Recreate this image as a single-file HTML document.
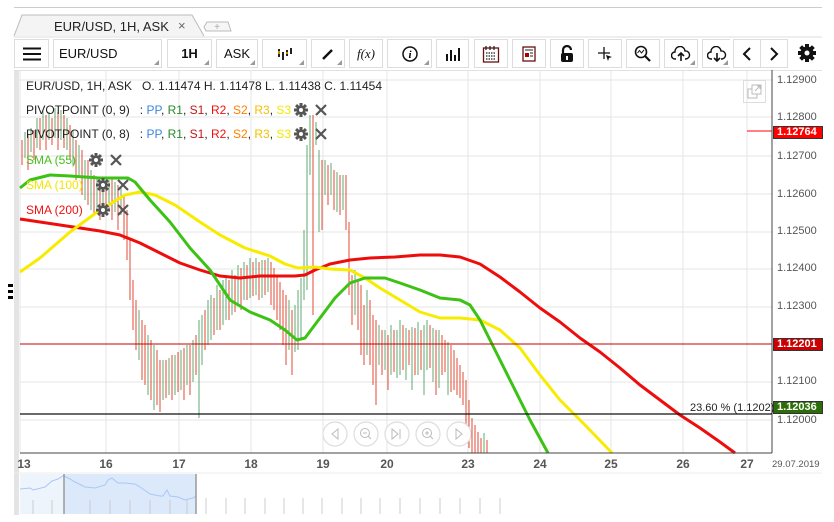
<!DOCTYPE html>
<html><head><meta charset="utf-8"><style>
*{margin:0;padding:0;box-sizing:border-box}
body{width:834px;height:522px;background:#fff;font-family:"Liberation Sans",sans-serif;position:relative;overflow:hidden}
.b{position:absolute;top:39px;height:29px;border:1px solid #ddd;background:#fff;font-size:13px;display:flex;align-items:center;justify-content:center;color:#111}
.tri{position:absolute;right:2px;bottom:2px;width:0;height:0;border-left:5px solid transparent;border-bottom:5px solid #999}
.t{position:absolute;font-size:12px;white-space:nowrap}
.pl{position:absolute;left:777px;font-size:11px;color:#555}
</style></head><body>
<div style="position:absolute;left:14px;top:7px;width:808px;height:1px;background:#ccc"></div>
<svg style="position:absolute;left:0;top:0" width="834" height="40">
<path d="M14 36 L22 15 L192 15 L204 36" fill="#f4f4f4" stroke="#bbb"/>
<path d="M204 27 L207 22 L228 22 L231 31 L206 31 Z" fill="#f6f6f6" stroke="#bbb"/>
<text x="217" y="30" font-size="10" fill="#aaa" text-anchor="middle" font-family="Liberation Sans">+</text>
<line x1="14" y1="37" x2="822" y2="37" stroke="#ddd"/>
</svg>
<div class="t" style="left:54px;top:19px;font-size:13px;color:#222">EUR/USD, 1H, ASK</div>
<div class="t" style="left:178px;top:18px;font-size:13px;color:#666">×</div>

<div class="b" style="left:14px;width:35px"><svg width="18" height="14"><path d="M0 1.5H18M0 7H18M0 12.5H18" stroke="#111" stroke-width="2"/></svg></div>
<div class="b" style="left:53px;width:109px;justify-content:flex-start;padding-left:5px">EUR/USD<span class="tri"></span></div>
<div class="b" style="left:167px;width:45px;font-weight:bold">1H<span class="tri"></span></div>
<div class="b" style="left:216px;width:42px">ASK<span class="tri"></span></div>
<div class="b" style="left:262px;width:45px"><svg width="16" height="12"><path d="M2 1V9M6 4V12M10 2V8M14 0V6" stroke="#222" stroke-width="2"/><path d="M2 3V6M10 4V6" stroke="#c80" stroke-width="2"/></svg><span class="tri"></span></div>
<div class="b" style="left:311px;width:34px"><svg width="12" height="12"><path d="M1 11L10 2" stroke="#111" stroke-width="2.5"/></svg><span class="tri"></span></div>
<div class="b" style="left:349px;width:34px;font-family:'Liberation Serif';font-style:italic;font-size:13px">f(x)</div>
<div class="b" style="left:387px;width:45px"><svg width="16" height="16"><circle cx="8" cy="8" r="7" fill="none" stroke="#111" stroke-width="1.5"/><text x="8" y="12" font-size="11" font-style="italic" font-weight="bold" text-anchor="middle" font-family="Liberation Serif">i</text></svg><span class="tri"></span></div>
<div class="b" style="left:436px;width:33px"><svg width="16" height="14"><path d="M2 14V7M6 14V3M10 14V8M14 14V1" stroke="#111" stroke-width="2"/></svg></div>
<div class="b" style="left:474px;width:34px"><svg width="18" height="18"><rect x="1.5" y="3" width="15" height="14" fill="none" stroke="#611" stroke-width="1.3"/><path d="M4 1V5M8 1V5M12 1V5M4 8h10M4 11h10M4 14h10" stroke="#222" stroke-width="1.3" stroke-dasharray="1.5 1"/></svg></div>
<div class="b" style="left:512px;width:34px"><svg width="14" height="16"><rect x="1" y="1" width="12" height="14" fill="none" stroke="#611" stroke-width="1.3"/><path d="M3 4h8M8 7h3M8 10h3" stroke="#222"/><rect x="3" y="7" width="4" height="4" fill="#a00"/></svg></div>
<div class="b" style="left:550px;width:34px"><svg width="14" height="18"><path d="M3 9V5a4 4 0 0 1 8 0" fill="none" stroke="#111" stroke-width="2.2"/><rect x="1" y="8" width="12" height="9" rx="2" fill="#111"/><rect x="6" y="11" width="2" height="4" fill="#fff"/></svg></div>
<div class="b" style="left:588px;width:34px"><svg width="16" height="16"><path d="M7 1V13M1 7H13" stroke="#111" stroke-width="1.3"/><path d="M9 9L15 11L12 12L11 15Z" fill="#111"/></svg></div>
<div class="b" style="left:626px;width:34px"><svg width="18" height="18"><circle cx="7" cy="7" r="5.5" fill="none" stroke="#111" stroke-width="1.6"/><path d="M11 11L16 16" stroke="#111" stroke-width="2.2"/><path d="M3.5 8L5.5 5.5L7.5 8L10 5" fill="none" stroke="#111"/></svg></div>
<div class="b" style="left:664px;width:34px"><svg width="20" height="16"><path d="M5 13H4a3.5 3.5 0 0 1 0-7a5 5 0 0 1 10-1a3.5 3.5 0 0 1 1 8h-1" fill="none" stroke="#111" stroke-width="1.4"/><path d="M10 15V7M7 10L10 7L13 10" fill="none" stroke="#111" stroke-width="1.6"/></svg><span class="tri"></span></div>
<div class="b" style="left:702px;width:28px;border-right:none"><svg width="20" height="16"><path d="M5 13H4a3.5 3.5 0 0 1 0-7a5 5 0 0 1 10-1a3.5 3.5 0 0 1 1 8h-1" fill="none" stroke="#111" stroke-width="1.4"/><path d="M10 7V15M7 12L10 15L13 12" fill="none" stroke="#111" stroke-width="1.6"/></svg><span class="tri"></span></div>
<div class="b" style="left:733px;width:28px"><svg width="10" height="14"><path d="M8 1L2 7L8 13" fill="none" stroke="#111" stroke-width="2"/></svg></div>
<div class="b" style="left:760px;width:28px"><svg width="10" height="14"><path d="M2 1L8 7L2 13" fill="none" stroke="#111" stroke-width="2"/></svg></div>
<div style="position:absolute;left:797px;top:43px"><svg width="20" height="20" viewBox="0 0 20 20"><g fill="#111"><circle cx="10" cy="10" r="6.5"/><rect x="8" y="1" width="4" height="18"/><rect x="1" y="8" width="18" height="4"/><g transform="rotate(45 10 10)"><rect x="8" y="1" width="4" height="18"/><rect x="1" y="8" width="18" height="4"/></g></g><circle cx="10" cy="10" r="2.5" fill="#fff"/></svg></div>

<div style="position:absolute;left:14px;top:70px;width:5px;height:445px;background:#e4e4e4"></div>
<div style="position:absolute;left:14px;top:70px;width:808px;height:1px;background:#e2e2e2"></div>

<svg style="position:absolute;left:0;top:0" width="834" height="522" font-family="Liberation Sans">
<g stroke="#e6e6e6">
<path d="M20 80H772M20 117H772M20 156H772M20 194H772M20 232H772M20 269H772M20 307H772M20 382H772M20 420H772"/>
<path d="M20 70V453M106 70V453M179 70V453M251 70V453M323 70V453M387 70V453M468 70V453M540 70V453M611 70V453M683 70V453M747 70V453"/>
</g>
<path stroke="#e04a35" fill="none" d="M22 140V165M28 135V170M34 130V160M40 118V150M46 115V150M52 118V145M58 112V150M64 115V148M70 125V160M76 140V180M82 150V195M88 160V205M94 175V215M100 182V220M106 185V215M112 178V220M118 185V230M124 195V240M127 210V260M130 240V300M133 280V330M136 300V350M142 320V380M145 325V385M151 340V400M157 350V405M160 360V412M166 360V398M172 355V400M178 352V392M184 348V400M190 345V395M196 335V375M205 310V350M214 298V335M220 290V330M229 280V320M235 275V312M241 268V310M247 265V300M253 262V296M259 262V300M265 260V295M271 262V305M274 268V310M277 275V320M280 282V330M283 290V345M286 295V365M292 310V375M313 115V315M322 160V230M328 165V205M334 170V210M340 175V215M346 175V230M349 222V295M352 275V325M358 280V330M361 285V355M364 305V365M370 300V365M373 315V385M376 320V405M382 330V375M388 335V390M394 330V372M403 325V370M409 330V365M415 328V375M421 330V370M430 325V368M436 330V395M442 335V375M445 340V372M451 345V392M454 350V390M457 358V395M460 365V398M463 372V405M466 380V438M469 400V448M472 418V453M475 425V453M478 432V453M481 438V453M487 440V453"/>
<path stroke="#5fa872" fill="none" d="M25 132V158M31 128V152M37 118V148M43 110V140M49 112V140M55 108V138M61 110V140M67 118V150M73 130V165M79 145V175M85 160V200M91 170V210M97 178V208M103 180V212M109 180V210M115 182V212M121 188V215M139 310V360M148 335V395M154 345V410M163 360V400M169 358V395M175 355V395M181 350V390M187 345V385M193 340V382M199 320V418M202 315V365M208 300V345M211 295V340M217 285V330M223 280V325M226 275V320M232 270V315M238 265V305M244 262V300M250 258V298M256 258V295M262 260V298M268 258V292M289 300V350M295 305V352M298 290V350M301 278V338M304 230V300M307 145V290M310 115V175M316 122V145M319 150V232M325 160V195M331 163V195M337 172V212M343 175V210M355 270V315M367 290V355M379 325V365M385 330V370M391 325V375M397 330V378M400 320V375M406 328V380M412 327V390M418 322V375M424 325V395M427 320V370M433 328V382M439 330V388M448 342V395M484 433V453"/>
<polyline fill="none" stroke="#ee0d0d" stroke-width="3" stroke-linejoin="round" points="20,219 40,222 60,225 80,228 100,231 120,235 140,243 160,253 180,263 200,270 220,276 240,278 260,276 280,276 295,276 305,275 315,270 330,264 350,260 370,258 395,257 420,255 440,255 460,257 480,264 500,277 520,292 540,308 560,322 580,338 600,352 620,368 640,385 660,400 680,415 700,428 720,442 735,453"/>
<polyline fill="none" stroke="#f7ec00" stroke-width="3" stroke-linejoin="round" points="20,272 40,258 70,232 100,210 125,195 140,192 155,195 175,205 200,222 220,235 245,248 270,256 285,264 298,268 315,267 330,269 350,270 365,278 380,288 400,300 420,312 440,318 460,318 480,320 500,330 520,348 540,375 560,400 585,425 612,453"/>
<polyline fill="none" stroke="#3cc214" stroke-width="3" stroke-linejoin="round" points="20,188 30,180 50,175 70,176 100,178 128,178 135,182 150,200 170,222 190,248 210,270 230,300 250,312 270,320 285,330 297,340 305,338 320,318 335,298 350,283 365,278 385,278 400,283 420,290 440,298 460,300 470,305 480,320 495,350 510,380 530,420 548,453"/>
<path d="M20 344H772" stroke="#c00000"/>
<path d="M20 414H772" stroke="#111" stroke-width="1.2"/>
<path d="M747 131H772" stroke="#f00"/>
<path d="M772 70V453M20 453H772" stroke="#444"/>
<g fill="#555">
<g transform="translate(301,110)"><circle r="4.5"/><rect x="-1.5" y="-7" width="3" height="14"/><rect x="-7" y="-1.5" width="14" height="3"/><rect x="-1.5" y="-7" width="3" height="14" transform="rotate(45)"/><rect x="-7" y="-1.5" width="14" height="3" transform="rotate(45)"/><circle r="2" fill="#fff"/></g>
<g transform="translate(301,134)"><circle r="4.5"/><rect x="-1.5" y="-7" width="3" height="14"/><rect x="-7" y="-1.5" width="14" height="3"/><rect x="-1.5" y="-7" width="3" height="14" transform="rotate(45)"/><rect x="-7" y="-1.5" width="14" height="3" transform="rotate(45)"/><circle r="2" fill="#fff"/></g>
<g transform="translate(96,160)"><circle r="4.5"/><rect x="-1.5" y="-7" width="3" height="14"/><rect x="-7" y="-1.5" width="14" height="3"/><rect x="-1.5" y="-7" width="3" height="14" transform="rotate(45)"/><rect x="-7" y="-1.5" width="14" height="3" transform="rotate(45)"/><circle r="2" fill="#fff"/></g>
<g transform="translate(103,185)"><circle r="4.5"/><rect x="-1.5" y="-7" width="3" height="14"/><rect x="-7" y="-1.5" width="14" height="3"/><rect x="-1.5" y="-7" width="3" height="14" transform="rotate(45)"/><rect x="-7" y="-1.5" width="14" height="3" transform="rotate(45)"/><circle r="2" fill="#fff"/></g>
<g transform="translate(103,210)"><circle r="4.5"/><rect x="-1.5" y="-7" width="3" height="14"/><rect x="-7" y="-1.5" width="14" height="3"/><rect x="-1.5" y="-7" width="3" height="14" transform="rotate(45)"/><rect x="-7" y="-1.5" width="14" height="3" transform="rotate(45)"/><circle r="2" fill="#fff"/></g>
</g>
<path stroke="#555" stroke-width="2.2" d="M316 105L326 115M326 105L316 115M316 129L326 139M326 129L316 139M111 155L121 165M121 155L111 165M118 180L128 190M128 180L118 190M118 205L128 215M128 205L118 215"/>
<g fill="#fff" stroke="#ddd" stroke-width="1.2"><circle cx="335" cy="434" r="12"/><circle cx="366" cy="434" r="12"/><circle cx="397" cy="434" r="12"/><circle cx="428" cy="434" r="12"/><circle cx="459" cy="434" r="12"/></g>
<path d="M338 429L332 434L338 439Z" fill="none" stroke="#bbb"/><circle cx="365" cy="433" r="4.5" fill="none" stroke="#bbb"/><path d="M368 436L371 439M363 433H367" stroke="#bbb"/><path d="M392 429V439L398 434ZM400 429V439" fill="none" stroke="#bbb"/><circle cx="427" cy="433" r="4.5" fill="none" stroke="#bbb"/><path d="M430 436L433 439M425 433H429M427 431V435" stroke="#bbb"/><path d="M456 429L462 434L456 439Z" fill="none" stroke="#bbb"/>
<g font-size="12" font-weight="bold" fill="#555" text-anchor="middle">
<text x="24" y="468">13</text><text x="106" y="468">16</text><text x="179" y="468">17</text><text x="251" y="468">18</text><text x="323" y="468">19</text><text x="387" y="468">20</text><text x="468" y="468">23</text><text x="540" y="468">24</text><text x="611" y="468">25</text><text x="683" y="468">26</text><text x="747" y="468">27</text>
</g>
<text x="772" y="467" font-size="9.5" fill="#555">29.07.2019</text>
<path d="M14 473H822" stroke="#eee"/>
<rect x="20" y="474" width="44" height="40" fill="#eef4fc"/><rect x="64" y="474" width="132" height="40" fill="#dce9fb"/>
<polyline points="20,489 30,488 33,490 45,487 52,481 58,479 63,476 64,476 70,479 75,482 85,487 95,488 105,485 108,480 112,478 118,483 125,483 135,484 143,489 150,494 160,496 163,496 167,490 170,496 178,497 185,500 193,498 196,496" fill="none" stroke="#a9c8f5"/>
<path d="M64 474V514M196 474V514" stroke="#999" stroke-width="1.5"/>
<path stroke="#ccc" d="M33 500V514M52 500V514M90 500V514M110 500V514M130 500V514M150 500V514M170 500V514M187 500V514M206 498V514M226 498V514M245 498V514M265 498V514M284 498V514M303 498V514M322 498V514M342 498V514M361 498V514M380 498V514M400 498V514M420 498V514M440 498V514M460 498V514M480 498V514M500 498V514"/>
</svg>

<div class="t" style="left:26px;top:79px;color:#222">EUR/USD, 1H, ASK&nbsp;&nbsp; O. 1.11474 H. 1.11478 L. 1.11438 C. 1.11454</div>
<div class="t" style="left:26px;top:103px;color:#222">PIVOTPOINT (0, 9)&nbsp;&nbsp; : <span style="color:#3a86e0">PP</span>, <span style="color:#2a8a2a">R1</span>, <span style="color:#c01818">S1</span>, <span style="color:#f01010">R2</span>, <span style="color:#ff7f00">S2</span>, <span style="color:#f5c000">R3</span>, <span style="color:#f2ea00">S3</span></div>
<div class="t" style="left:26px;top:127px;color:#222">PIVOTPOINT (0, 8)&nbsp;&nbsp; : <span style="color:#3a86e0">PP</span>, <span style="color:#2a8a2a">R1</span>, <span style="color:#c01818">S1</span>, <span style="color:#f01010">R2</span>, <span style="color:#ff7f00">S2</span>, <span style="color:#f5c000">R3</span>, <span style="color:#f2ea00">S3</span></div>
<div class="t" style="left:26px;top:153px;color:#44c21a">SMA (55)</div>
<div class="t" style="left:26px;top:178px;color:#f2e600">SMA (100)</div>
<div class="t" style="left:26px;top:203px;color:#f01010">SMA (200)</div>
<div class="t" style="left:690px;top:402px;font-size:11px;color:#222">23.60 % (1.1202)</div>

<div class="pl" style="top:74px">1.12900</div>
<div class="pl" style="top:111px">1.12800</div>
<div class="pl" style="top:150px">1.12700</div>
<div class="pl" style="top:188px">1.12600</div>
<div class="pl" style="top:225px">1.12500</div>
<div class="pl" style="top:262px">1.12400</div>
<div class="pl" style="top:300px">1.12300</div>
<div class="pl" style="top:375px">1.12100</div>
<div class="pl" style="top:414px">1.12000</div>
<div style="position:absolute;left:773px;top:126px;width:50px;height:13px;background:#f00;border:1px solid #333;color:#fff;font-size:11px;font-weight:bold;padding-left:3px;line-height:11px">1.12764</div>
<div style="position:absolute;left:773px;top:338px;width:50px;height:13px;background:#c00;border:1px solid #333;color:#fff;font-size:11px;font-weight:bold;padding-left:3px;line-height:11px">1.12201</div>
<div style="position:absolute;left:773px;top:401px;width:50px;height:13px;background:#2b6e08;border:1px solid #333;color:#fff;font-size:11px;font-weight:bold;padding-left:3px;line-height:11px">1.12036</div>

<div style="position:absolute;left:743px;top:80px;width:23px;height:23px;border:1px solid #ddd"><svg width="21" height="21"><rect x="4" y="8" width="9" height="9" fill="none" stroke="#bbb"/><rect x="8" y="4" width="9" height="9" fill="#fff" stroke="#bbb"/><path d="M11 10L16 5M13 5H16V8" fill="none" stroke="#bbb"/></svg></div>
<div style="position:absolute;left:8px;top:284px;width:5px;height:16px;background:repeating-linear-gradient(#000 0 3px,transparent 3px 6px)"></div>
</body></html>
